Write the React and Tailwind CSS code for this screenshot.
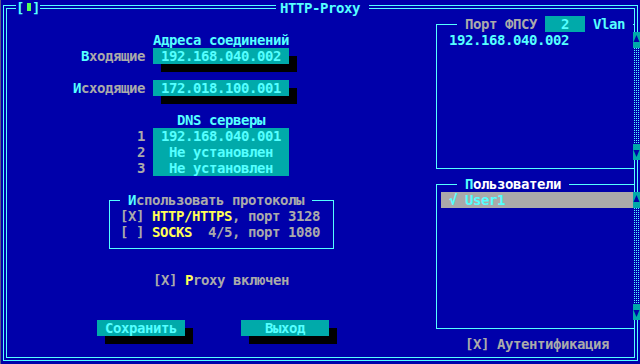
import React from "react";

const C = "text-[#55ffff]";
const Y = "text-[#ffff55]";

function Scroll() {
  return (
    <div className="absolute left-[196px] top-[7px] w-[7px] h-[128px] flex flex-col">
      <div className="h-[16px] bg-[#00aaaa]">
        <svg width="7" height="16" className="block">
          <polygon points="3.5,3 0.5,10 6.5,10" fill="#0000aa" />
        </svg>
      </div>
      <div className="flex-1 bg-[#0000aa] bg-[conic-gradient(at_1px_1px,#55ffff_25%,transparent_0)] bg-[length:2px_2px]" />
      <div className="h-[16px] bg-[#00aaaa]">
        <svg width="7" height="16" className="block">
          <polygon points="0.5,6 6.5,6 3.5,13" fill="#0000aa" />
        </svg>
      </div>
    </div>
  );
}

function Field({ children, shadow }) {
  return (
    <div
      className={
        "ml-[8px] w-[136px] h-[16px] bg-[#00aaaa] text-[#55ffff] text-center " +
        (shadow ? "shadow-[8px_8px_0_0_#000]" : "")
      }
    >
      {children}
    </div>
  );
}

export default function App() {
  return (
    <div className="w-[640px] h-[364px] bg-[#0000aa] overflow-hidden border-l border-[#5a5a86] font-['DejaVu_Sans_Mono',monospace] font-bold text-[14px] leading-[16px] tracking-[-0.43px] text-[#aaaaaa] whitespace-pre">
      <div className="ml-[2px] mt-[5px] w-[635px] h-[356px] border border-[#55ffff] p-[2px] relative">
        <div className="absolute left-[12px] -top-[6px] h-[16px] flex bg-[#0000aa]">
          <div className={"w-[8px] " + C}>[</div>
          <div className="w-[8px]">
            <div className="ml-[3px] mt-[3px] w-[4px] h-[8px] bg-[#55ff55]" />
          </div>
          <div className={"w-[8px] " + C}>]</div>
        </div>
        <div className={"absolute left-[272px] -top-[6px] h-[16px] pl-[4px] pr-[9px] bg-[#0000aa] " + C}>
          HTTP-Proxy
        </div>

        <div className="h-full border border-[#55ffff] flex">
          <div className="w-[429px] flex flex-col">
            <div className={"mt-[23px] ml-[146px] w-[136px] h-[16px] text-center " + C}>
              Адреса соединений
            </div>
            <div className="flex h-[16px]">
              <div className="w-[138px] text-right">
                <span className={C}>В</span>ходящие
              </div>
              <Field shadow>192.168.040.002</Field>
            </div>
            <div className="h-[16px]" />
            <div className="flex h-[16px]">
              <div className="w-[138px] text-right">
                <span className={C}>И</span>сходящие
              </div>
              <Field shadow>172.018.100.001</Field>
            </div>
            <div className="h-[16px]" />
            <div className={"ml-[146px] w-[136px] h-[16px] text-center " + C}>DNS серверы</div>
            <div className="flex h-[16px]">
              <div className="w-[138px] text-right">1</div>
              <Field>192.168.040.001</Field>
            </div>
            <div className="flex h-[16px]">
              <div className="w-[138px] text-right">2</div>
              <Field>Не установлен</Field>
            </div>
            <div className="flex h-[16px]">
              <div className="w-[138px] text-right">3</div>
              <Field>Не установлен</Field>
            </div>

            <div className="mt-[24px] ml-[102px] w-[225px] h-[49px] border border-[#55ffff] relative pt-[7px] pl-[10px]">
              <div className="absolute left-[10px] -top-[9px] h-[16px] px-[8px] bg-[#0000aa]">
                <span className={C}>И</span>спользовать протоколы
              </div>
              <div className="h-[16px]">
                [X] <span className={Y}>HTTP/HTTPS</span>, порт 3128
              </div>
              <div className="h-[16px]">
                [ ] <span className={Y}>SOCKS</span>  4/5, порт 1080
              </div>
            </div>

            <div className="mt-[23px] ml-[146px] h-[16px]">
              [X] <span className={Y}>P</span>roxy включен
            </div>

            <div className="mt-[32px] flex h-[16px]">
              <div className="ml-[90px] w-[88px] h-[16px] bg-[#00aaaa] text-[#55ffff] text-center shadow-[8px_8px_0_0_#000]">
                Сохранить
              </div>
              <div className="ml-[56px] w-[88px] h-[16px] bg-[#00aaaa] text-[#55ffff] text-center shadow-[8px_8px_0_0_#000]">
                Выход
              </div>
            </div>
          </div>

          <div className="w-[198px] flex flex-col">
            <div className="mt-[15px] h-[145px] border-l border-t border-b border-[#55ffff] relative pl-[12px] pt-[7px]">
              <div className="absolute left-[20px] -top-[9px] h-[16px] flex bg-[#0000aa]">
                <div className="px-[8px]">Порт ФПСУ</div>
                <div className="w-[40px] bg-[#00aaaa] text-[#55ffff] text-center">2</div>
                <div className={"px-[8px] " + C}>Vlan</div>
              </div>
              <div className={"h-[16px] " + C}>192.168.040.002</div>
              <Scroll />
            </div>

            <div className="mt-[15px] h-[145px] border-l border-t border-b border-[#55ffff] relative pt-[7px]">
              <div className="absolute left-[20px] -top-[9px] h-[16px] px-[8px] bg-[#0000aa] text-white">
                <span className={C}>П</span>ользователи
              </div>
              <div className="ml-[4px] w-[192px] h-[16px] bg-[#aaaaaa] pl-[8px] text-[#55ffff]">
                √ User1
              </div>
              <Scroll />
            </div>

            <div className="mt-[7px] ml-[29px] h-[16px]">[X] Аутентификация</div>
          </div>
        </div>
      </div>
    </div>
  );
}
